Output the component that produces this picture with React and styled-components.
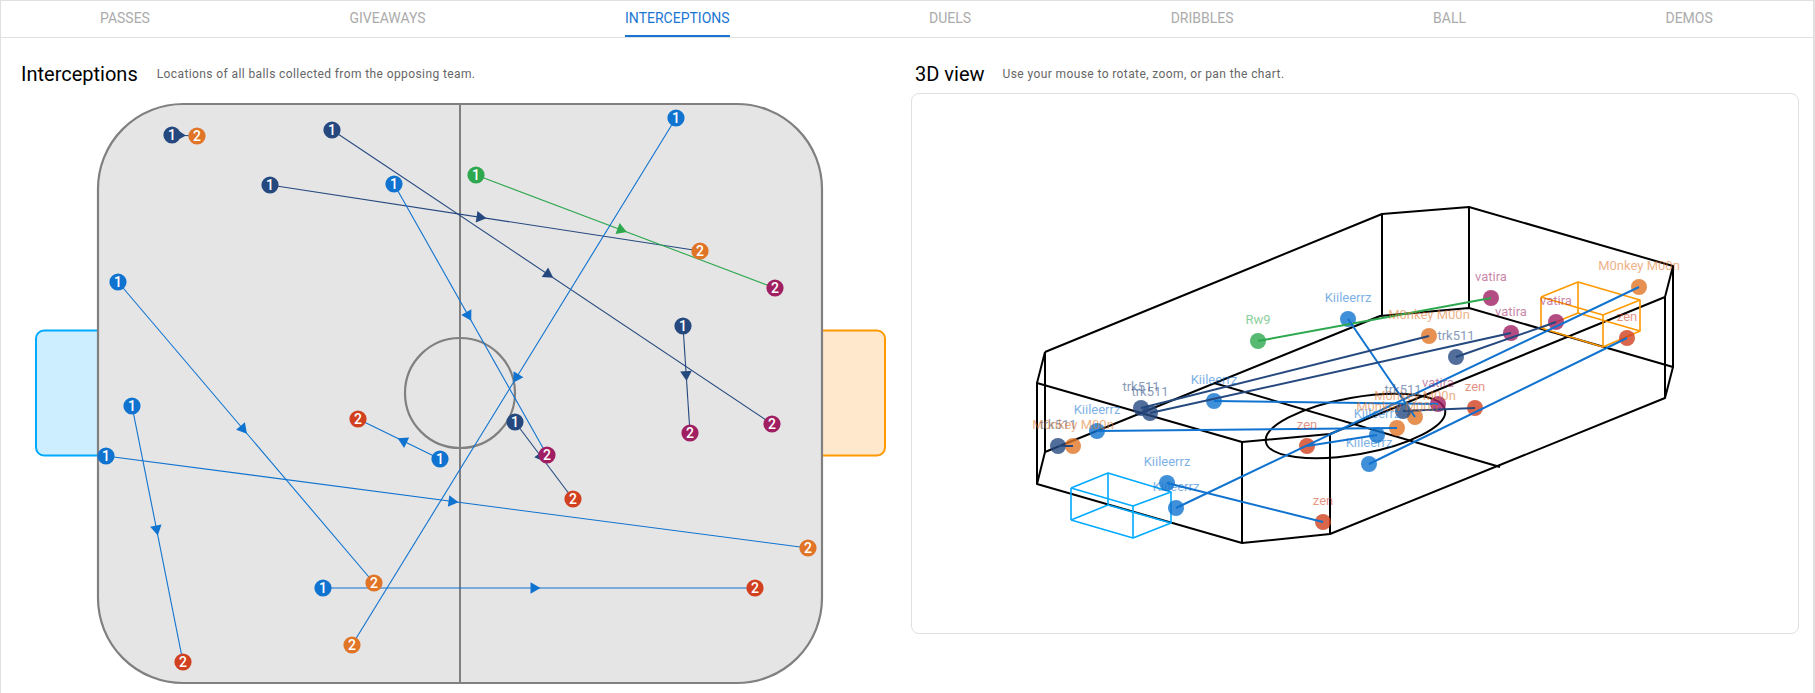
import React from 'react';
import styled, { createGlobalStyle } from 'styled-components';

const GlobalStyle = createGlobalStyle`
  body {
    margin: 0;
    background: #fff;
    font-family: Roboto, "Liberation Sans", sans-serif;
  }
`;

const COLORS = {
  blue: '#1073d0',
  navy: '#25497f',
  orange: '#e07427',
  purple: '#a01f63',
  red: '#d1401f',
  green: '#2ea84f',
};

const Card = styled.div`
  box-sizing: border-box;
  height: 693px;
  overflow: hidden;
  border: solid 1px #e0e0e0;
  border-bottom: none;
  border-right-width: 2px;
`;

const Tabs = styled.nav`
  display: flex;
  gap: 199.5px;
  height: 36px;
  padding-left: 99px;
  border-bottom: solid 1px #e0e0e0;
`;

const Tab = styled.div`
  box-sizing: border-box;
  height: 36px;
  line-height: 34px;
  font-size: 14px;
  font-weight: 400;
  text-transform: uppercase;
  color: ${props => (props.active ? '#1976d2' : '#ababab')};
  border-bottom: solid 2px ${props => (props.active ? '#1976d2' : 'transparent')};
`;

const Content = styled.div`
  display: grid;
  grid-template-columns: 905px 1fr;
  padding-top: 22px;
`;

const Panel = styled.section`
  min-width: 0;
`;

const PanelHeader = styled.header`
  display: flex;
  align-items: center;
  gap: ${props => props.gap}px;
  height: 28px;
  padding-left: ${props => props.inset}px;
`;

const Title = styled.h2`
  margin: 0;
  font-size: 20px;
  font-weight: 400;
  color: #000;
`;

const Caption = styled.span`
  font-size: 12px;
  letter-spacing: 0.4px;
  color: #666;
`;

const FieldSvg = styled.svg`
  display: block;
  width: 860px;
  height: 590px;
  margin: 12px 0 0 29px;
`;

const ChartBox = styled.div`
  box-sizing: border-box;
  width: 888px;
  height: 541px;
  margin: 5px 0 0 5px;
  border: solid 1px #e0e0e0;
  border-radius: 8px;
`;

const ChartSvg = styled.svg`
  display: block;
  width: 886px;
  height: 539px;
`;

const Badge = styled.text`
  font-size: 14px;
  font-weight: 500;
  fill: #fff;
  text-anchor: middle;
`;

const PlayerLabel = styled.text`
  font-size: 13px;
  text-anchor: middle;
  opacity: 0.55;
`;

const TABS = ['Passes', 'Giveaways', 'Interceptions', 'Duels', 'Dribbles', 'Ball', 'Demos'];

// start, end and colours of each interception on the flat map
const PLAYS = [
  { a: [172, 135], b: [197, 136], from: 'navy', to: 'orange' },
  { a: [332, 130], b: [772, 424], from: 'navy', to: 'purple' },
  { a: [270, 185], b: [700, 251], from: 'navy', to: 'orange' },
  { a: [394, 184], b: [547, 455], from: 'blue', to: 'purple' },
  { a: [476, 175], b: [775, 288], from: 'green', to: 'purple' },
  { a: [676, 118], b: [352, 645], from: 'blue', to: 'orange' },
  { a: [683, 326], b: [690, 433], from: 'navy', to: 'purple' },
  { a: [118, 282], b: [374, 583], from: 'blue', to: 'orange' },
  { a: [440, 459], b: [358, 419], from: 'blue', to: 'red' },
  { a: [515, 422], b: [573, 499], from: 'navy', to: 'red' },
  { a: [132, 406], b: [183, 662], from: 'blue', to: 'red' },
  { a: [106, 456], b: [808, 548], from: 'blue', to: 'orange' },
  { a: [323, 588], b: [755, 588], from: 'blue', to: 'red' },
];

const Play = ({ a, b, from }) => {
  const angle = Math.atan2(b[1] - a[1], b[0] - a[0]);
  const mx = (a[0] + b[0]) / 2 - 5 * Math.cos(angle);
  const my = (a[1] + b[1]) / 2 - 5 * Math.sin(angle);
  return (
    <g>
      <line x1={a[0]} y1={a[1]} x2={b[0]} y2={b[1]} stroke={COLORS[from]} strokeWidth="1.1" />
      <polygon
        points="6.5,0 -3.5,-5.8 -3.5,5.8"
        fill={COLORS[from]}
        transform={`translate(${mx} ${my}) rotate(${(angle * 180) / Math.PI})`}
      />
    </g>
  );
};

const Pin = ({ at, color, n }) => (
  <g>
    <circle cx={at[0]} cy={at[1]} r="8.6" fill={COLORS[color]} />
    <Badge x={at[0]} y={at[1] + 5}>{n}</Badge>
  </g>
);

const Field = () => (
  <FieldSvg viewBox="30 100 860 590">
    <rect x="36" y="330.5" width="100" height="125" rx="8" fill="#cdeeff" stroke="#00aaff" strokeWidth="2" />
    <rect x="785" y="330.5" width="100" height="125" rx="8" fill="#ffe8cc" stroke="#ff9900" strokeWidth="2" />
    <rect x="98" y="104" width="724" height="579" rx="85" fill="#e5e5e5" stroke="#808080" strokeWidth="2.2" />
    <line x1="460" y1="104" x2="460" y2="683" stroke="#808080" strokeWidth="2" />
    <circle cx="460" cy="393" r="55" fill="none" stroke="#808080" strokeWidth="2.2" />
    {PLAYS.map((p, i) => <Play key={i} {...p} />)}
    {PLAYS.map((p, i) => (
      <g key={i}>
        <Pin at={p.a} color={p.from} n="1" />
        <Pin at={p.b} color={p.to} n="2" />
      </g>
    ))}
  </FieldSvg>
);

// arena wireframe, page coordinates as seen from the camera
const WIRES = [
  [[1045, 352], [1382, 214], [1469, 207], [1673, 266], [1665, 297], [1330, 434], [1242, 442], [1037, 383], [1045, 352]],
  [[1045, 452], [1380, 316], [1469, 308], [1673, 367], [1665, 398], [1330, 534], [1242, 543], [1037, 484], [1045, 452]],
  [[1045, 352], [1045, 452]],
  [[1037, 383], [1037, 484]],
  [[1382, 214], [1382, 316]],
  [[1469, 207], [1469, 308]],
  [[1673, 266], [1673, 367]],
  [[1665, 297], [1665, 398]],
  [[1330, 434], [1330, 534]],
  [[1242, 442], [1242, 543]],
  [[1214, 383], [1500, 467]],
];

const goalLines = (c) => [
  [c[0], c[1], c[2], c[3], c[0]],
  [c[4], c[5], c[6], c[7], c[4]],
  [c[0], c[4]], [c[1], c[5]], [c[2], c[6]], [c[3], c[7]],
];

const BLUE_GOAL = goalLines([[1071, 488], [1108, 473], [1171, 492], [1133, 506], [1071, 520], [1108, 505], [1171, 523], [1133, 538]]);
const ORANGE_GOAL = goalLines([[1541, 297], [1578, 282], [1640, 300], [1603, 315], [1541, 328], [1578, 313], [1640, 331], [1603, 347]]);

const MONKEY = 'M0nkey M00n';
const KIIL = 'Kiileerrz';

const PAIRS = [
  { color: 'green', a: { at: [1258, 341], name: 'Rw9', c: 'green' }, b: { at: [1491, 298], name: 'vatira', c: 'purple' } },
  { color: 'blue', a: { at: [1348, 319], name: KIIL, c: 'blue' }, b: { at: [1415, 417], name: MONKEY, c: 'orange' } },
  { color: 'navy', a: { at: [1141, 408], name: 'trk511', c: 'navy' }, b: { at: [1429, 336], name: MONKEY, c: 'orange' } },
  { color: 'navy', a: { at: [1150, 413], name: 'trk511', c: 'navy' }, b: { at: [1511, 333], name: 'vatira', c: 'purple' } },
  { color: 'navy', a: { at: [1456, 357], name: 'trk511', c: 'navy' }, b: { at: [1556, 322], name: 'vatira', c: 'purple' } },
  { color: 'blue', a: { at: [1176, 508], name: KIIL, c: 'blue' }, b: { at: [1639, 287], name: MONKEY, c: 'orange' } },
  { color: 'blue', a: { at: [1369, 464], name: KIIL, c: 'blue' }, b: { at: [1627, 338], name: 'zen', c: 'red' } },
  { color: 'blue', a: { at: [1167, 483], name: KIIL, c: 'blue' }, b: { at: [1323, 522], name: 'zen', c: 'red' } },
  { color: 'blue', a: { at: [1214, 401], name: KIIL, c: 'blue' }, b: { at: [1438, 404], name: 'vatira', c: 'purple' } },
  { color: 'blue', a: { at: [1097, 431], name: KIIL, c: 'blue' }, b: { at: [1397, 428], name: MONKEY, c: 'orange' } },
  { color: 'navy', a: { at: [1403, 411], name: 'trk511', c: 'navy' }, b: { at: [1475, 408], name: 'zen', c: 'red' } },
  { color: 'blue', a: { at: [1377, 435], name: KIIL, c: 'blue' }, b: { at: [1307, 446], name: 'zen', c: 'red' } },
  { color: 'navy', a: { at: [1058, 446], name: 'trk511', c: 'navy' }, b: { at: [1073, 446], name: MONKEY, c: 'orange' } },
];

const pts = (list) => list.map(p => p.join(',')).join(' ');

const Wire = ({ list, color, w }) => (
  <polyline points={pts(list)} fill="none" stroke={color} strokeWidth={w} strokeLinejoin="round" />
);

const Chart3D = () => (
  <ChartSvg viewBox="912 94 886 539">
    {WIRES.map((l, i) => <Wire key={i} list={l} color="#000" w="2" />)}
    {BLUE_GOAL.map((l, i) => <Wire key={i} list={l} color="#00aaff" w="1.6" />)}
    {ORANGE_GOAL.map((l, i) => <Wire key={i} list={l} color="#ff9900" w="1.6" />)}
    <ellipse cx="1355.5" cy="426" rx="91" ry="28.5" fill="none" stroke="#000" strokeWidth="2" transform="rotate(-10 1355.5 426)" />
    {PAIRS.flatMap(p => [p.a, p.b]).map((m, i) => (
      <circle key={i} cx={m.at[0]} cy={m.at[1]} r="8" fill={COLORS[m.c]} opacity="0.8" />
    ))}
    {PAIRS.map((p, i) => (
      <line key={i} x1={p.a.at[0]} y1={p.a.at[1]} x2={p.b.at[0]} y2={p.b.at[1]} stroke={COLORS[p.color]} strokeWidth="2" />
    ))}
    {PAIRS.flatMap(p => [p.a, p.b]).map((m, i) => (
      <PlayerLabel key={i} x={m.at[0]} y={m.at[1] - 17} fill={COLORS[m.c]}>{m.name}</PlayerLabel>
    ))}
  </ChartSvg>
);

const App = () => (
  <Card>
    <GlobalStyle />
    <Tabs>
      {TABS.map(t => <Tab key={t} active={t === 'Interceptions'}>{t}</Tab>)}
    </Tabs>
    <Content>
      <Panel>
        <PanelHeader inset={20} gap={19}>
          <Title>Interceptions</Title>
          <Caption>Locations of all balls collected from the opposing team.</Caption>
        </PanelHeader>
        <Field />
      </Panel>
      <Panel>
        <PanelHeader inset={9} gap={18}>
          <Title>3D view</Title>
          <Caption>Use your mouse to rotate, zoom, or pan the chart.</Caption>
        </PanelHeader>
        <ChartBox>
          <Chart3D />
        </ChartBox>
      </Panel>
    </Content>
  </Card>
);

export default App;
